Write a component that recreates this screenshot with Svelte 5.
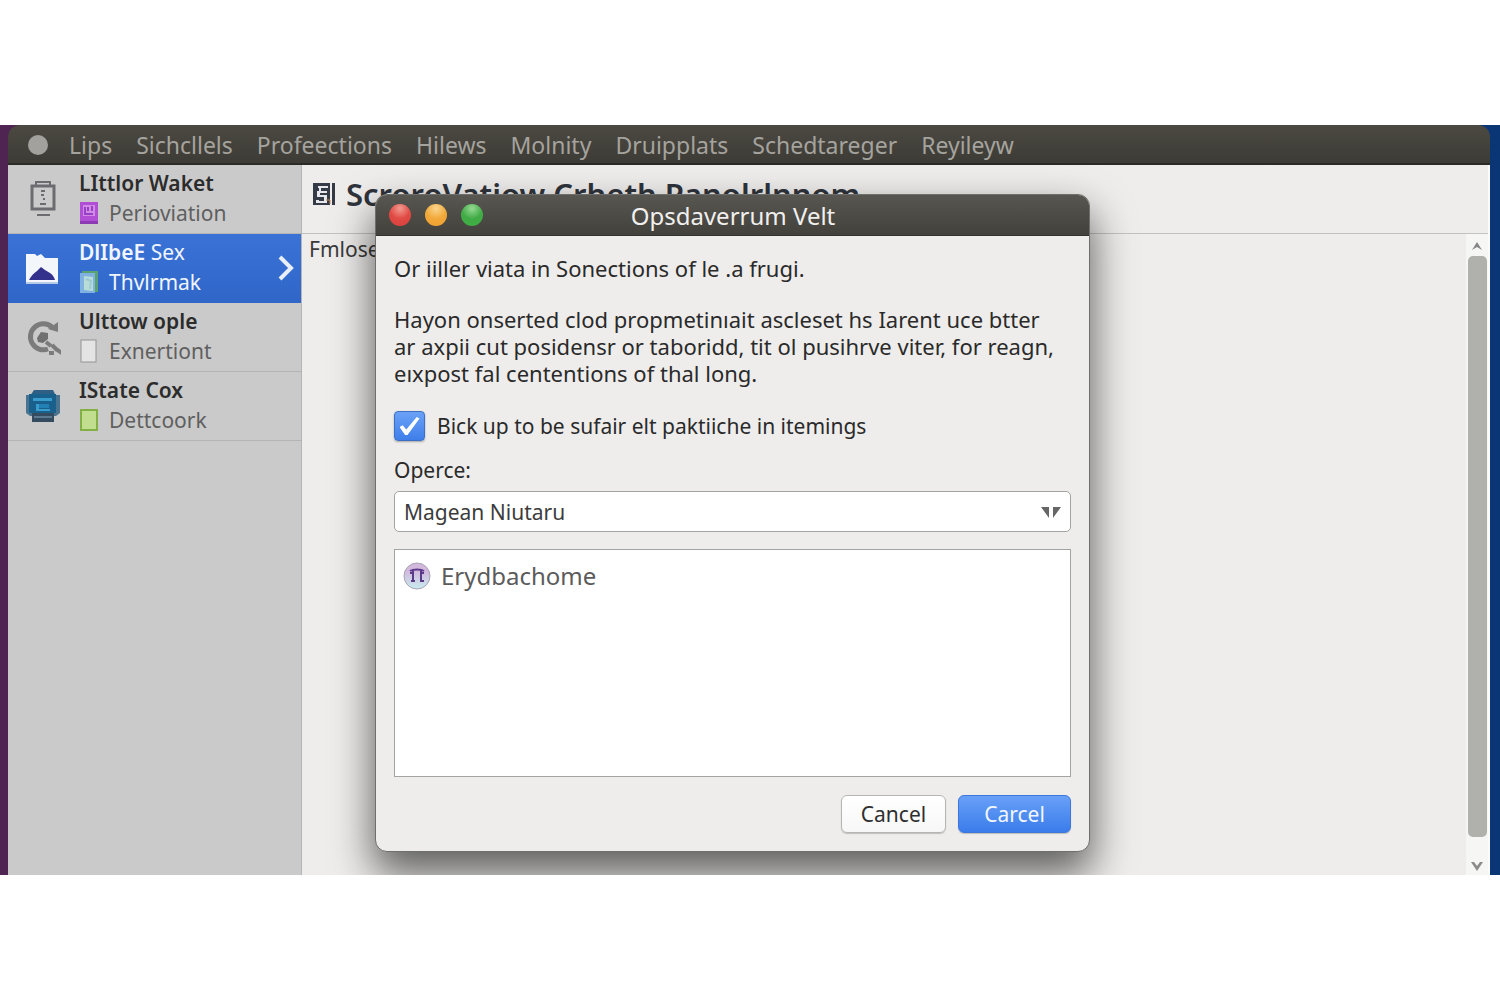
<script>
    const menus = ['Lips', 'Sichcllels', 'Profeections', 'Hilews', 'Molnity', 'Druipplats', 'Schedtareger', 'Reyileyw'];

    const places = [
        { icon: 'drive', title: 'LIttlor Waket', sub: 'Perioviation', badge: 'purple' },
        { icon: 'folder', title: 'DlIbeE', rest: 'Sex', sub: 'Thvlrmak', badge: 'photo' },
        { icon: 'gear', title: 'Ulttow ople', sub: 'Exnertiont', badge: 'blank' },
        { icon: 'printer', title: 'IState Cox', sub: 'Dettcoork', badge: 'green' }
    ];

    let selected = $state(1);
    let agreed = $state(true);
    let choice = $state('Magean Niutaru');
</script>

<div class="page">
    <div class="desktop">
        <div class="window">
            <nav class="menubar">
                <span class="dot"></span>
                <div class="menus">
                    {#each menus as menu}
                        <button class="menu">{menu}</button>
                    {/each}
                </div>
            </nav>

            <div class="body">
                <aside>
                    {#each places as place, i}
                        <button class="place" class:active={i === selected} onclick={() => selected = i}>
                            {#if place.icon === 'drive'}
                                <svg class="icon" width="36" height="40" viewBox="0 0 36 40" fill="none" stroke="#6c6c70" stroke-width="2">
                                    <path d="M11 7V3h14v4" />
                                    <rect x="7" y="7" width="22" height="23" stroke-width="3" />
                                    <path d="M16 12h4M16 16h3M18 20h2M15 25h6" />
                                    <path d="M12 36h13" />
                                </svg>
                            {:else if place.icon === 'folder'}
                                <svg class="icon" width="36" height="40" viewBox="0 0 36 40">
                                    <path d="M1 6h9l2 2 4-2 4 4h13v25H1z" fill="#f3f6fb" />
                                    <path d="M4 32c2-4 5-7 8-9l4-4 4 3 5 3c3 2 4 4 5 7z" fill="#34318c" />
                                    <path d="M1 35h32" stroke="#b7c9e8" stroke-width="2" />
                                </svg>
                            {:else if place.icon === 'gear'}
                                <svg class="icon" width="36" height="40" viewBox="0 0 36 40" fill="none" stroke="#7b7b7b">
                                    <path d="M27 10A13 13 0 1 0 23 32" stroke-width="5" />
                                    <path d="M23 12l10 3V5z" fill="#7b7b7b" stroke="none" />
                                    <path d="M12 21l4-6 7 1v6l-5 4-5-1z" fill="#707070" stroke="none" />
                                    <path d="M21 25l5 4M27 28l5 5M31 32l6 4M24 36h5" stroke-width="4" />
                                </svg>
                            {:else}
                                <svg class="icon" width="36" height="40" viewBox="0 0 36 40">
                                    <path d="M9 4h19l3 6H5z" fill="#2e5f86" />
                                    <path d="M1 9h34v18l-4 3H5l-4-3z" fill="#4a7390" />
                                    <path d="M4 8h27v19H4z" fill="#19608d" />
                                    <path d="M8 12h19v3H8zM11 18h3v5h11v2H11z" fill="#3a9bcd" />
                                    <path d="M14 18h10v4H14z" fill="#2280b5" />
                                    <path d="M7 27h22v9H7z" fill="#344b60" />
                                    <path d="M9 31h18" stroke="#5b7a92" stroke-width="2" />
                                </svg>
                            {/if}
                            <span class="labels">
                                <span class="title">{place.title}{#if place.rest}<span class="light">&nbsp;{place.rest}</span>{/if}</span>
                                <span class="sub">
                                    <svg width="20" height="24" viewBox="0 0 20 24">
                                        {#if place.badge === 'purple'}
                                            <path d="M1 1h18v22H1z" fill="#b04fd6" />
                                            <path d="M4 4h12v11H4z" fill="#cf8be6" />
                                            <path d="M6 6v7h8M9 6v4M13 5v5" stroke="#9a3fc4" stroke-width="2" fill="none" />
                                            <path d="M1 20h18v3H1z" fill="#8d3bb2" />
                                        {:else if place.badge === 'photo'}
                                            <path d="M3 1h16v21H3z" fill="#5aa36f" />
                                            <path d="M1 3h15v20H1z" fill="#7fb2e0" />
                                            <path d="M5 6l9 1v14l-9-1z" fill="#b9dcd9" />
                                            <path d="M7 9l5 2-1 8" stroke="#9acbd3" stroke-width="2" fill="none" />
                                        {:else if place.badge === 'blank'}
                                            <rect x="2" y="1" width="15" height="22" fill="#e4e4e4" stroke="#949494" />
                                        {:else}
                                            <rect x="2" y="2" width="16" height="20" fill="#c0de8e" stroke="#83b044" stroke-width="2" />
                                        {/if}
                                    </svg>
                                    {place.sub}
                                </span>
                            </span>
                            {#if i === selected}
                                <svg class="chevron" width="18" height="28" viewBox="0 0 18 28" fill="none" stroke="#e8effb" stroke-width="4">
                                    <path d="M3 3l11 11L3 25" />
                                </svg>
                            {/if}
                        </button>
                    {/each}
                </aside>

                <section class="content">
                    <header>
                        <svg width="24" height="24" viewBox="0 0 24 24">
                            <path d="M1 1h17v22H1zM20 1h3v22h-3z" fill="#343a46" />
                            <path d="M6 4h10v2H9v3h6v2H8v2h7v8H4v-3h3v1h5v-4H5V9h2V6H6z" fill="#e6e8ee" />
                            <path d="M14 18h4v4" stroke="#c98b58" fill="none" />
                        </svg>
                        <h1>ScroroVatiow Crheth Panolrlnnom</h1>
                    </header>
                    <div class="pane">
                        <p>Fmlose</p>
                        <div class="scrollbar">
                            <svg width="10" height="8" viewBox="0 0 10 8"><path d="M0 8l5-8 5 8-5-3z" fill="#858585" /></svg>
                            <div class="thumb"></div>
                            <svg width="12" height="10" viewBox="0 0 12 10"><path d="M0 1h3l3 4 3-4h3L6 10z" fill="#8b8b8b" /></svg>
                        </div>
                    </div>
                </section>
            </div>
        </div>

        <div class="dialog" role="dialog" aria-labelledby="dialog-title">
            <div class="titlebar">
                <button class="light-btn red" aria-label="Close"></button>
                <button class="light-btn amber" aria-label="Minimize"></button>
                <button class="light-btn green" aria-label="Zoom"></button>
                <h2 id="dialog-title">Opsdaverrum Velt</h2>
            </div>
            <form onsubmit={(e) => e.preventDefault()}>
                <p>Or iiller viata in Sonections of le .a frugi.</p>
                <p class="message">
                    Hayon onserted clod propmetinıait ascleset hs Iarent uce btter<br>
                    ar axpii cut posidensr or taboridd, tit ol pusihrve viter, for reagn,<br>
                    eıxpost fal cententions of thal long.
                </p>
                <label class="check">
                    <input type="checkbox" bind:checked={agreed}>
                    Bick up to be sufair elt paktiiche in itemings
                </label>
                <label class="caption" for="operce">Operce:</label>
                <div class="select">
                    <select id="operce" bind:value={choice}>
                        <option>Magean Niutaru</option>
                    </select>
                    <svg width="20" height="12" viewBox="0 0 20 12" fill="#666"><path d="M0 0h8v11zM12 0h8l-8 11z" /></svg>
                </div>
                <ul>
                    <li>
                        <svg width="28" height="28" viewBox="0 0 28 28">
                            <defs>
                                <linearGradient id="orb" x1="0" y1="0" x2="0" y2="1">
                                    <stop offset="0.3" stop-color="#d3b8dd" />
                                    <stop offset="1" stop-color="#c8ecee" />
                                </linearGradient>
                            </defs>
                            <circle cx="14" cy="14" r="13" fill="url(#orb)" stroke="#a9a3b5" />
                            <path d="M7 9c3-2 11-2 14 0M10 8v11M18 8v11M8 19h4M17 19h4M7 11h3M18 11h3" fill="none" stroke="#5b3a8a" stroke-width="2" />
                        </svg>
                        Erydbachome
                    </li>
                </ul>
                <div class="actions">
                    <button type="button">Cancel</button>
                    <button type="submit" class="primary">Carcel</button>
                </div>
            </form>
        </div>
    </div>
</div>

<style>
    :global(body) {
        margin: 0;
        background: #fff;
        font-family: "Noto Sans", sans-serif;
    }

    * {
        box-sizing: border-box;
    }

    button {
        font-family: inherit;
        border: 0;
        padding: 0;
        background: none;
        cursor: pointer;
    }

    h1, h2, p, ul {
        margin: 0;
        padding: 0;
    }

    svg {
        flex: none;
    }

    .page {
        min-height: 100vh;
        display: flex;
        align-items: center;
    }

    .desktop {
        position: relative;
        flex: 1;
        min-height: 75vh;
        display: flex;
        padding: 0 10px 0 8px;
        overflow: hidden;
        background: linear-gradient(90deg, #4f2352 0%, #3d2152 50%, #0a3676 100%);
    }

    .window {
        flex: 1;
        display: flex;
        flex-direction: column;
        min-width: 0;
    }

    .menubar {
        display: flex;
        align-items: center;
        gap: 21px;
        height: 40px;
        padding: 2px 0 0 20px;
        border-radius: 12px 12px 0 0;
        border-bottom: 2px solid #2b2a26;
        background: linear-gradient(#4b4942, #3d3b35);
    }

    .menus {
        display: flex;
        gap: 24px;
    }

    .dot {
        width: 20px;
        height: 20px;
        border-radius: 50%;
        background: #a3a19d;
    }

    .menu {
        font-size: 23px;
        color: #a5a39e;
    }

    .body {
        flex: 1;
        display: flex;
    }

    aside {
        width: 294px;
        background: #cacaca;
        border-right: 1px solid #b5b5b5;
    }

    .place {
        display: flex;
        align-items: center;
        width: 100%;
        height: 69px;
        padding: 0 6px 0 17px;
        border-bottom: 1px solid #b4b4b4;
        text-align: left;
        color: #5f5f5f;
    }

    .place.active {
        background: linear-gradient(#3b72d6, #2f66c8);
        border-color: #2f66c8;
        color: #f0f5ff;
    }

    .labels {
        flex: 1;
        display: flex;
        flex-direction: column;
        padding: 0 0 2px 18px;
    }

    .title {
        font-size: 21px;
        line-height: 30px;
        font-weight: 600;
        color: #2c2c2c;
    }

    .active .title {
        color: #f0f5ff;
    }

    .title .light {
        font-weight: 400;
    }

    .sub {
        display: flex;
        align-items: center;
        gap: 10px;
        font-size: 21px;
        line-height: 30px;
    }

    .content {
        flex: 1;
        display: flex;
        flex-direction: column;
        background: #eeedeb;
        border-right: 2px solid #fafafa;
    }

    header {
        display: flex;
        align-items: center;
        gap: 10px;
        height: 69px;
        padding: 0 10px 10px;
        border-bottom: 1px solid #c2c2c0;
    }

    h1 {
        font-size: 31px;
        line-height: 36px;
        font-weight: 600;
        color: #2f333b;
    }

    .pane {
        flex: 1;
        display: flex;
        justify-content: space-between;
    }

    .pane p {
        padding-left: 7px;
        font-size: 21px;
        line-height: 30px;
        color: #3a3a3a;
    }

    .scrollbar {
        display: flex;
        flex-direction: column;
        align-items: center;
        gap: 6px;
        width: 22px;
        padding: 8px 0 4px;
        background: #f6f6f5;
    }

    .thumb {
        flex: 1;
        width: 19px;
        margin-bottom: 18px;
        border-radius: 5px;
        background: #b0b0ad;
    }

    .dialog {
        position: absolute;
        top: 69px;
        left: 375px;
        width: 715px;
        border: 1px solid #6f6e6a;
        border-radius: 12px;
        background: #eeedeb;
        box-shadow: 0 20px 40px 2px rgba(0, 0, 0, 0.6);
        color: #2a2a2a;
    }

    .titlebar {
        display: flex;
        align-items: center;
        gap: 14px;
        height: 41px;
        padding-left: 13px;
        border-bottom: 1px solid #33322e;
        border-radius: 11px 11px 0 0;
        background: linear-gradient(#585650, #43413b);
    }

    .light-btn {
        width: 22px;
        height: 22px;
        border-radius: 50%;
    }

    .red {
        background: radial-gradient(circle at 50% 20%, #f39a90, #e04a44 50%, #d9403b);
    }

    .amber {
        background: radial-gradient(circle at 50% 20%, #fbd58e, #f2a93a 50%, #ee9f2d);
    }

    .green {
        background: radial-gradient(circle at 50% 20%, #97da94, #41ab46 50%, #3eae44);
    }

    h2 {
        flex: 1;
        padding-right: 120px;
        text-align: center;
        font-size: 24px;
        font-weight: 400;
        color: #f1f0ee;
    }

    form {
        display: flex;
        flex-direction: column;
        padding: 19px 18px 18px;
        font-size: 22px;
        line-height: 27px;
    }

    .message {
        margin-top: 24px;
        white-space: nowrap;
    }

    .check {
        display: flex;
        align-items: center;
        gap: 12px;
        margin-top: 24px;
        font-size: 21px;
    }

    .check input {
        appearance: none;
        display: grid;
        place-items: center;
        width: 31px;
        height: 30px;
        margin: 0;
        border: 1px solid #3d6fc4;
        border-radius: 4px;
        background: #fff;
        box-shadow: 0 1px 2px rgba(0, 0, 0, 0.3);
    }

    .check input:checked {
        background: linear-gradient(#6ba2f7, #3f7eea);
    }

    .check input:checked::after {
        content: "";
        width: 20px;
        height: 18px;
        background: #fff;
        clip-path: polygon(0 55%, 16% 46%, 34% 70%, 86% 0, 100% 8%, 40% 100%, 28% 100%);
    }

    .caption {
        margin-top: 16px;
        font-size: 21px;
    }

    .select {
        position: relative;
        display: flex;
        margin-top: 7px;
    }

    select {
        appearance: none;
        flex: 1;
        height: 41px;
        padding: 0 9px;
        border: 1px solid #a3a3a1;
        border-radius: 5px;
        background: #fff;
        font-family: inherit;
        font-size: 21px;
        line-height: 32px;
        color: #3c3c3c;
    }

    .select svg {
        position: absolute;
        right: 10px;
        top: 16px;
        pointer-events: none;
    }

    ul {
        height: 228px;
        margin-top: 17px;
        padding: 12px 8px;
        border: 1px solid #a3a3a1;
        background: #fff;
        list-style: none;
    }

    li {
        display: flex;
        align-items: center;
        gap: 10px;
        font-size: 24px;
        line-height: 28px;
        color: #5b5b5b;
    }

    .actions {
        display: flex;
        justify-content: flex-end;
        gap: 12px;
        margin-top: 18px;
    }

    .actions button {
        width: 105px;
        height: 38px;
        border: 1px solid #b5b5b3;
        border-radius: 6px;
        background: linear-gradient(#fff, #f7f7f7);
        box-shadow: 0 1px 1px rgba(0, 0, 0, 0.2);
        font-size: 21px;
        color: #2f2f2f;
    }

    .actions .primary {
        width: 113px;
        border-color: #3c77dc;
        background: linear-gradient(#69a0f8, #3a7cea);
        color: #f2f7ff;
    }
</style>
